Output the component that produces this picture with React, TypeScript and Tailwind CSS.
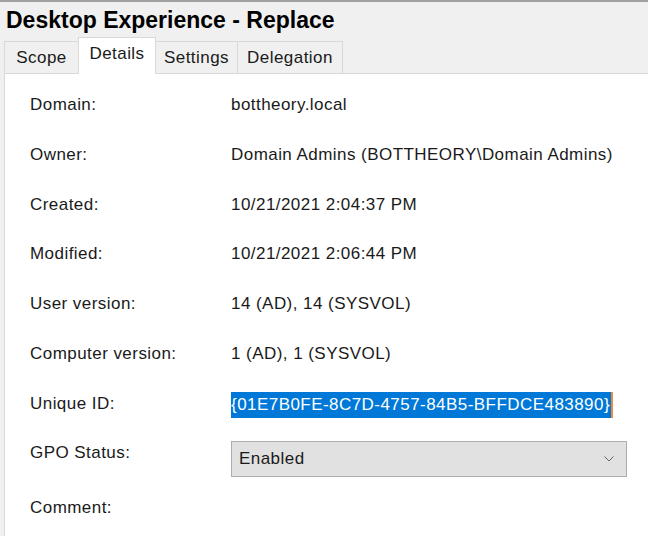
import { FC } from "react";

const rows: { label: string; value: string }[] = [
  { label: "Domain:", value: "bottheory.local" },
  { label: "Owner:", value: "Domain Admins (BOTTHEORY\\Domain Admins)" },
  { label: "Created:", value: "10/21/2021 2:04:37 PM" },
  { label: "Modified:", value: "10/21/2021 2:06:44 PM" },
  { label: "User version:", value: "14 (AD), 14 (SYSVOL)" },
  { label: "Computer version:", value: "1 (AD), 1 (SYSVOL)" },
];

const tabs = [
  { name: "Scope", w: "w-[75px]" },
  { name: "Details", w: "w-[78px]" },
  { name: "Settings", w: "w-[83px]" },
  { name: "Delegation", w: "w-[106px]" },
];

const App: FC = () => {
  return (
    <div
      className="w-[648px] h-[536px] overflow-hidden bg-[#f0f0f0] border-t-2 border-[#a0a0a0] text-[#1a1a1a] tracking-[0.45px]"
      style={{ fontFamily: '"Liberation Sans", Arial, sans-serif' }}
    >
      <h1 className="pl-[6px] pt-[4px] h-[34px] text-[23px] font-bold leading-[28px] tracking-normal text-black">
        Desktop Experience - Replace
      </h1>
      <div className="flex items-end pl-[4px] h-[37px]">
        {tabs.map((t) =>
          t.name === "Details" ? (
            <div
              key={t.name}
              className={`${t.w} h-[37px] text-center bg-white border-t border-x border-[#d9d9d9] text-[17px] leading-[32px] -mb-px -ml-px relative z-10`}
            >
              {t.name}
            </div>
          ) : (
            <div
              key={t.name}
              className={`${t.w} h-[32px] text-center bg-[#f0f0f0] border-t border-x border-[#d9d9d9] text-[17px] leading-[32px] -ml-px first:ml-0`}
            >
              {t.name}
            </div>
          )
        )}
      </div>
      <div className="ml-[4px] h-[500px] bg-white border-l border-t border-[#d9d9d9] pl-[25px] pt-[20px] text-[17px]">
        {rows.map((r) => (
          <div key={r.label} className="flex h-[49.8px] items-start">
            <div className="w-[201px] leading-[22px]">{r.label}</div>
            <div className="leading-[22px]">{r.value}</div>
          </div>
        ))}
        <div className="flex h-[49px] items-start">
          <div className="w-[201px] leading-[22px]">Unique ID:</div>
          <div className="-mt-[1px] h-[26px] bg-[#0078d7] text-white leading-[26px] pr-[1px] border-r-2 border-[#f08a3a]">
            {"{01E7B0FE-8C7D-4757-84B5-BFFDCE483890}"}
          </div>
        </div>
        <div className="flex h-[55px] items-start">
          <div className="w-[201px] leading-[22px]">GPO Status:</div>
          <div className="mt-[-1px] w-[396px] h-[36px] bg-[#e1e1e1] border border-[#adadad] flex items-center justify-between pl-[7px] pr-[12px] text-[17px]">
            <span>Enabled</span>
            <svg width="10" height="6" viewBox="0 0 10 6" fill="none">
              <path d="M0.5 0.5 L5 5 L9.5 0.5" stroke="#666" strokeWidth="1" />
            </svg>
          </div>
        </div>
        <div className="flex items-start">
          <div className="w-[201px] leading-[22px]">Comment:</div>
        </div>
      </div>
    </div>
  );
};

export default App;
